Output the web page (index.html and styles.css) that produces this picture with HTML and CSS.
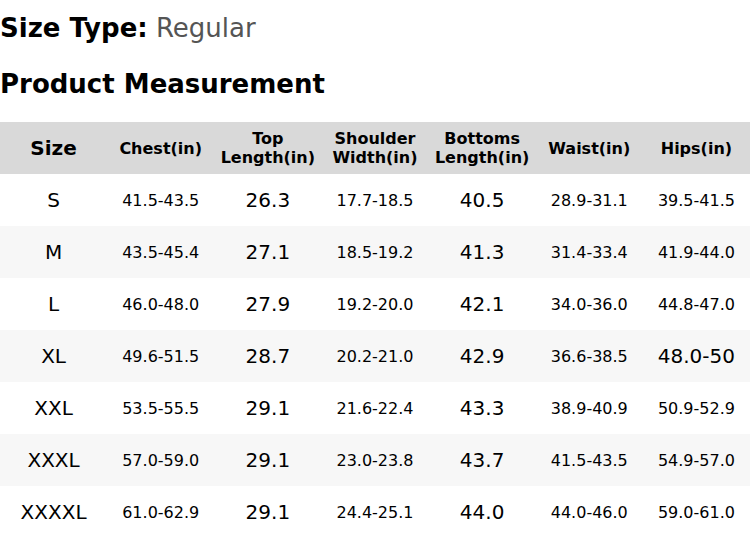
FILE: index.html
```html
<!DOCTYPE html>
<html>
<head>
<meta charset="utf-8">
<link rel="stylesheet" href="styles.css">
</head>
<body>
<div class="page">
  <div class="size-type"><span class="label">Size Type:</span> <span class="value">Regular</span></div>
  <div class="section-title">Product Measurement</div>
  <table class="chart">
    <thead>
      <tr>
        <th class="first">Size</th>
        <th>Chest(in)</th>
        <th>Top<br>Length(in)</th>
        <th>Shoulder<br>Width(in)</th>
        <th>Bottoms<br>Length(in)</th>
        <th>Waist(in)</th>
        <th>Hips(in)</th>
      </tr>
    </thead>
    <tbody>
      <tr><td class="sz">S</td><td>41.5-43.5</td><td class="big">26.3</td><td>17.7-18.5</td><td class="big">40.5</td><td>28.9-31.1</td><td>39.5-41.5</td></tr>
      <tr><td class="sz">M</td><td>43.5-45.4</td><td class="big">27.1</td><td>18.5-19.2</td><td class="big">41.3</td><td>31.4-33.4</td><td>41.9-44.0</td></tr>
      <tr><td class="sz">L</td><td>46.0-48.0</td><td class="big">27.9</td><td>19.2-20.0</td><td class="big">42.1</td><td>34.0-36.0</td><td>44.8-47.0</td></tr>
      <tr><td class="sz">XL</td><td>49.6-51.5</td><td class="big">28.7</td><td>20.2-21.0</td><td class="big">42.9</td><td>36.6-38.5</td><td class="big">48.0-50</td></tr>
      <tr><td class="sz">XXL</td><td>53.5-55.5</td><td class="big">29.1</td><td>21.6-22.4</td><td class="big">43.3</td><td>38.9-40.9</td><td>50.9-52.9</td></tr>
      <tr><td class="sz">XXXL</td><td>57.0-59.0</td><td class="big">29.1</td><td>23.0-23.8</td><td class="big">43.7</td><td>41.5-43.5</td><td>54.9-57.0</td></tr>
      <tr><td class="sz">XXXXL</td><td>61.0-62.9</td><td class="big">29.1</td><td>24.4-25.1</td><td class="big">44.0</td><td>44.0-46.0</td><td>59.0-61.0</td></tr>
    </tbody>
  </table>
</div>
</body>
</html>
```
FILE: styles.css
```css
html, body {
  margin: 0;
  padding: 0;
  background: #ffffff;
}
body {
  font-family: "DejaVu Sans", sans-serif;
  color: #000;
}
.page {
  width: 750px;
  padding-top: 13px;
}
.size-type {
  font-size: 26px;
  line-height: 30px;
  height: 30px;
  white-space: nowrap;
}
.size-type .label {
  font-weight: bold;
}
.size-type .value {
  color: #555555;
}
.section-title {
  margin-top: 26px;
  font-size: 26px;
  line-height: 30px;
  height: 30px;
  font-weight: bold;
  white-space: nowrap;
}
.chart {
  margin-top: 23px;
  width: 750px;
  border-collapse: collapse;
  table-layout: fixed;
}
.chart th {
  background: #d9d9d9;
  height: 52px;
  padding: 0;
  font-size: 16px;
  line-height: 19px;
  font-weight: bold;
  text-align: center;
  vertical-align: middle;
}
.chart th.first {
  font-size: 20px;
}
.chart td {
  height: 52px;
  padding: 0;
  font-size: 16px;
  text-align: center;
  vertical-align: middle;
  white-space: nowrap;
}
.chart td.sz,
.chart td.big {
  font-size: 20px;
}
.chart tbody tr:nth-child(even) td {
  background: #f7f7f7;
}
```
